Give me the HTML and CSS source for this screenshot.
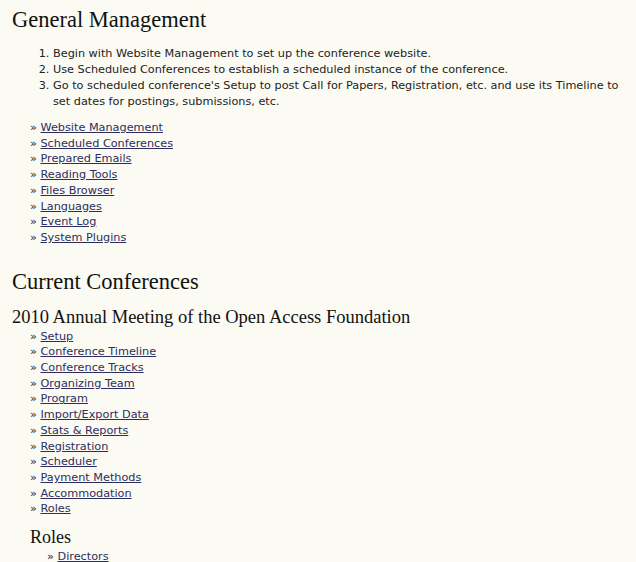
FILE: index.html
```html
<!DOCTYPE html>
<html>
<head>
<meta charset="utf-8">
<link rel="stylesheet" href="styles.css">
</head>
<body>
<div class="page">
  <h2 class="title">General Management</h2>
  <ol class="steps">
    <li>Begin with Website Management to set up the conference website.</li>
    <li>Use Scheduled Conferences to establish a scheduled instance of the conference.</li>
    <li>Go to scheduled conference's Setup to post Call for Papers, Registration, etc. and use its Timeline to set dates for postings, submissions, etc.</li>
  </ol>
  <ul class="plain">
    <li>&#187; <a href="#">Website Management</a></li>
    <li>&#187; <a href="#">Scheduled Conferences</a></li>
    <li>&#187; <a href="#">Prepared Emails</a></li>
    <li>&#187; <a href="#">Reading Tools</a></li>
    <li>&#187; <a href="#">Files Browser</a></li>
    <li>&#187; <a href="#">Languages</a></li>
    <li>&#187; <a href="#">Event Log</a></li>
    <li>&#187; <a href="#">System Plugins</a></li>
  </ul>
  <h2 class="title second">Current Conferences</h2>
  <h3 class="conf">2010 Annual Meeting of the Open Access Foundation</h3>
  <ul class="plain sub">
    <li>&#187; <a href="#">Setup</a></li>
    <li>&#187; <a href="#">Conference Timeline</a></li>
    <li>&#187; <a href="#">Conference Tracks</a></li>
    <li>&#187; <a href="#">Organizing Team</a></li>
    <li>&#187; <a href="#">Program</a></li>
    <li>&#187; <a href="#">Import/Export Data</a></li>
    <li>&#187; <a href="#">Stats &amp; Reports</a></li>
    <li>&#187; <a href="#">Registration</a></li>
    <li>&#187; <a href="#">Scheduler</a></li>
    <li>&#187; <a href="#">Payment Methods</a></li>
    <li>&#187; <a href="#">Accommodation</a></li>
    <li>&#187; <a href="#">Roles</a></li>
  </ul>
  <h4 class="roles">Roles</h4>
  <ul class="plain roleslist">
    <li>&#187; <a href="#">Directors</a></li>
  </ul>
</div>
</body>
</html>
```

FILE: styles.css
```css
html, body {
  margin: 0;
  padding: 0;
  background: #fbfbf3;
}
body {
  font-family: "DejaVu Sans", Verdana, sans-serif;
  font-size: 11.25px;
  color: #222;
}
.page {
  padding: 0 8px 0 12px;
}
.title {
  font-family: Georgia, "Liberation Serif", serif;
  font-weight: normal;
  font-size: 22.5px;
  line-height: 24px;
  margin: 8px 0 0 0;
  color: #111;
}
.title.second {
  margin-top: 24px;
}
.steps {
  margin: 14px 0 0 0;
  padding-left: 41px;
  line-height: 16px;
}
.plain {
  list-style: none;
  margin: 10px 0 0 0;
  padding-left: 18px;
  line-height: 15.7px;
}
a {
  color: #2d2d60;
  text-decoration: underline;
}
.conf {
  font-family: Georgia, "Liberation Serif", serif;
  font-weight: normal;
  font-size: 18.5px;
  line-height: 22px;
  margin: 12px 0 0 0;
  color: #111;
}
.sub {
  margin-top: 1px;
}
.roles {
  font-family: Georgia, "Liberation Serif", serif;
  font-weight: normal;
  font-size: 18px;
  line-height: 20px;
  margin: 10px 0 0 18px;
  color: #111;
}
.roleslist {
  margin-top: 2px;
  padding-left: 35px;
}
```
